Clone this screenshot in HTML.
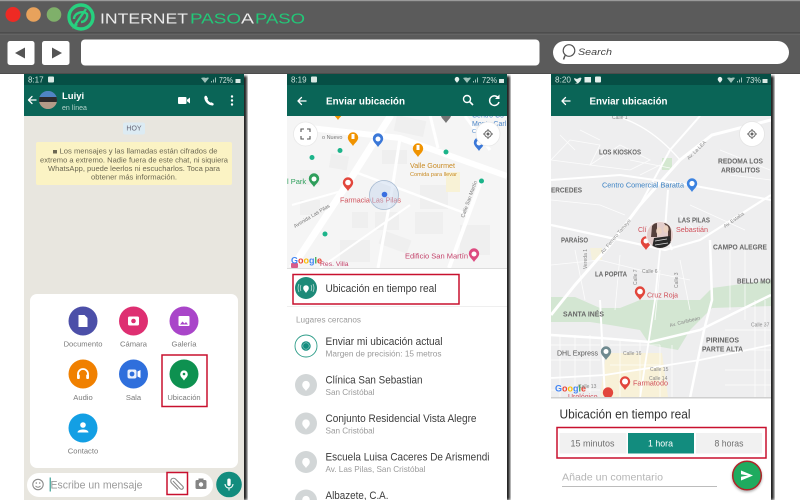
<!DOCTYPE html>
<html lang="es"><head><meta charset="utf-8"><title>WhatsApp ubicación</title>
<style>
html,body{margin:0;padding:0;background:#fff;width:800px;height:500px;overflow:hidden}
svg{display:block;font-family:"Liberation Sans",sans-serif;filter:blur(.3px)}
.st{font-size:8px;fill:#cfe2dc}
.lb{font-size:7.6px;fill:#7b7b7b;text-anchor:middle}
.h{font-size:10.5px;font-weight:bold;fill:#fff}
.t{font-size:11px;fill:#3c3c3c}
.s{font-size:8.4px;fill:#9a9a9a}
.r{fill:none;stroke:#fff;stroke-linecap:round;stroke-linejoin:round}
.m{font-size:7px;font-weight:bold;fill:#666}
.c{font-size:5px;fill:#888}
</style></head><body>
<svg width="800" height="500" viewBox="0 0 800 500" xmlns="http://www.w3.org/2000/svg">
<defs>
<filter id="sh" x="-10%" y="-10%" width="120%" height="120%"><feGaussianBlur stdDeviation="1.3"/></filter>
<path id="pin" d="M0,0C-1.8,-3 -5.2,-5 -5.2,-8.5A5.2,5.2 0 1 1 5.2,-8.5C5.2,-5 1.8,-3 0,0Z"/>
<clipPath id="c2"><rect x="287" y="116" width="220" height="152"/></clipPath>
<clipPath id="c3"><rect x="551" y="116" width="220" height="282"/></clipPath>
<clipPath id="av"><circle cx="660" cy="235" r="13"/></clipPath>
<clipPath id="av1"><circle cx="48" cy="100" r="9"/></clipPath>
</defs>

<!-- browser chrome -->
<rect width="800" height="74" fill="#5b5b5b"/>
<rect width="800" height="1.2" fill="#9a9a9a"/>
<rect y="32.5" width="800" height="1" fill="#3f3f3f"/>
<rect y="33.5" width="800" height="1" fill="#6e6e6e"/>
<rect y="73" width="800" height="1" fill="#4c4c4c"/>
<circle cx="13" cy="14.5" r="7.5" fill="#ee2a24"/>
<circle cx="33.5" cy="14.5" r="7.3" fill="#e8a25c"/>
<circle cx="54" cy="14.5" r="7.3" fill="#7fb06a"/>
<circle cx="81" cy="17" r="12" fill="none" stroke="#27d17f" stroke-width="3.4"/>
<path d="M75,25L86,9M74,19C74,13 83,10 87,14C88,18 85,22 81,22" fill="none" stroke="#27d17f" stroke-width="2.4"/>
<path d="M72,29L78,25L76,23Z" fill="#27d17f"/>
<text x="100" y="23.3" font-size="15" fill="#ececec" textLength="88" lengthAdjust="spacingAndGlyphs">INTERNET</text>
<text x="190" y="23.3" font-size="15" fill="#22c878" textLength="51" lengthAdjust="spacingAndGlyphs">PASO</text>
<text x="241" y="23.3" font-size="15" fill="#ececec" textLength="13" lengthAdjust="spacingAndGlyphs">A</text>
<text x="255" y="23.3" font-size="15" fill="#22c878" textLength="50" lengthAdjust="spacingAndGlyphs">PASO</text>
<rect x="7.5" y="41" width="27" height="24" rx="2.5" fill="#fff"/>
<path d="M15,53L25,47.5V58.5Z" fill="#555"/>
<rect x="42" y="41" width="27.5" height="24" rx="2.5" fill="#fff"/>
<path d="M62,53L52,47.5V58.5Z" fill="#555"/>
<rect x="81" y="39.5" width="458.5" height="26" rx="4" fill="#fff"/>
<rect x="553" y="41" width="236" height="23" rx="11.5" fill="#fff"/>
<circle cx="569" cy="50.5" r="5.8" fill="none" stroke="#555" stroke-width="1.2"/>
<path d="M565,55.5L563.5,59.5" stroke="#555" stroke-width="1.5"/>
<text x="578" y="55" font-size="9" font-style="italic" fill="#444" textLength="34" lengthAdjust="spacingAndGlyphs">Search</text>

<!-- shadows -->
<rect x="241" y="76" width="6" height="424" fill="#222" filter="url(#sh)"/>
<rect x="504" y="76" width="6" height="424" fill="#222" filter="url(#sh)"/>
<rect x="768" y="76" width="6" height="424" fill="#222" filter="url(#sh)"/>

<!-- PHONE 1 -->
<rect x="24" y="74" width="220" height="426" fill="#e8e6df"/>
<rect x="24" y="74" width="220" height="11" fill="#064f45"/>
<rect x="24" y="85" width="220" height="31" fill="#0a6557"/>
<text x="28" y="82.5" class="st">8:17</text>
<rect x="48" y="76.5" width="6" height="6" rx="1" fill="#d8e8e3"/>
<path d="M206,78Q204,77 201,78L205,83L209,78Q208,77 206,78Z" fill="#9dc0b8"/>
<path d="M211,82.5h1v-1.5h-1zM213,82.5h1v-3h-1zM215,82.5h1v-5h-1z" fill="#9dc0b8"/>
<text x="219" y="83" class="st" textLength="14" lengthAdjust="spacingAndGlyphs">72%</text>
<rect x="235.5" y="79" width="5" height="4" fill="#d8e8e3"/>
<path d="M36,100h-7M32,96.5L28.5,100L32,103.5" class="r" stroke-width="1.3"/>
<circle cx="48" cy="100" r="9" fill="#6e7c90"/>
<g clip-path="url(#av1)"><rect x="39" y="91" width="18" height="6" fill="#4f84c4"/><rect x="39" y="97" width="18" height="5" fill="#2e2a2c"/><rect x="39" y="102" width="18" height="7" fill="#b49b88"/></g>
<text x="62" y="99" font-size="9.5" font-weight="bold" fill="#fff">Luiyi</text>
<text x="62" y="110" font-size="7" fill="#b8d4cc">en línea</text>
<rect x="178" y="97" width="8.5" height="7" rx="1" fill="#fff"/><path d="M187,99.8L190,97.5V103.5L187,101.2Z" fill="#fff"/>
<path d="M205,96C206,95.5 207,96 207,96.800L208,98.500C207.500,99.500 207.500,100 209,101.500C210.500,103 211,102.500 211.500,102.200L213.500,103.500C214,104.300 213.500,105.500 212.500,105.500C208,105.500 204,101 204.300,97Z" fill="#fff"/>
<circle cx="232" cy="96.500" r="1.200" fill="#fff"/><circle cx="232" cy="100.500" r="1.200" fill="#fff"/><circle cx="232" cy="104.500" r="1.200" fill="#fff"/>
<rect x="123" y="122.500" width="22" height="12" rx="2" fill="#dcebf3"/>
<text x="134" y="130.500" font-size="7" fill="#667" text-anchor="middle">HOY</text>
<rect x="36" y="142" width="196" height="43" rx="2" fill="#fbf3c4"/>
<g font-size="7.300" fill="#6c6852" text-anchor="middle">
<rect x="53" y="150" width="4" height="3.500" fill="#6c6852"/>
<text x="138.500" y="153.500" textLength="158" lengthAdjust="spacingAndGlyphs">Los mensajes y las llamadas están cifrados de</text>
<text x="134" y="162.500" textLength="188" lengthAdjust="spacingAndGlyphs">extremo a extremo. Nadie fuera de este chat, ni siquiera</text>
<text x="134" y="171" textLength="172" lengthAdjust="spacingAndGlyphs">WhatsApp, puede leerlos ni escucharlos. Toca para</text>
<text x="134" y="179.500" textLength="86" lengthAdjust="spacingAndGlyphs">obtener más información.</text>
</g>
<rect x="30" y="294" width="208" height="174" rx="7" fill="#fff"/>
<g>
<circle cx="83" cy="321" r="14.500" fill="#4c4fa8"/><path d="M78.500,315h6l3,3v9h-9z" fill="#fff"/>
<circle cx="133.500" cy="321" r="14.500" fill="#de2f71"/><rect x="128" y="316.500" width="11" height="9" rx="1.500" fill="#fff"/><circle cx="133.500" cy="321" r="2.300" fill="#de2f71"/>
<circle cx="184" cy="321" r="14.500" fill="#a945c9"/><rect x="178.500" y="316" width="11" height="10" rx="1" fill="#fff"/><path d="M180,324.500l2.500,-3l2,2l1.500,-1.500l2,2.500z" fill="#a945c9"/>
<circle cx="83" cy="374" r="14.500" fill="#f08000"/><path d="M78,377v-3a5,5 0 0 1 10,0v3" fill="none" stroke="#fff" stroke-width="1.800"/><rect x="77" y="374.500" width="2.800" height="4.500" rx="1" fill="#fff"/><rect x="86.200" y="374.500" width="2.800" height="4.500" rx="1" fill="#fff"/>
<circle cx="133.500" cy="374" r="14.500" fill="#2f6fdc"/><rect x="127.500" y="369.500" width="9" height="9" rx="2" fill="#fff" opacity=".9"/><circle cx="132" cy="374" r="2.400" fill="#2f6fdc"/><path d="M137.500,371.500l3,-1.500v8l-3,-1.500z" fill="#fff"/>
<circle cx="184" cy="374" r="14.500" fill="#0e9150"/><path d="M184,380.500c-1,-2 -3.800,-3.500 -3.800,-6.300a3.800,3.800 0 1 1 7.600,0c0,2.800 -2.800,4.300 -3.800,6.300z" fill="#fff"/><circle cx="184" cy="374" r="1.300" fill="#0e9150"/>
<circle cx="83" cy="428" r="14.500" fill="#139fe4"/><circle cx="83" cy="425" r="2.800" fill="#fff"/><path d="M77.500,432.500c0,-4 11,-4 11,0z" fill="#fff"/>
<text x="83" y="346.500" class="lb">Documento</text><text x="133.500" y="346.500" class="lb">Cámara</text><text x="184" y="346.500" class="lb">Galería</text>
<text x="83" y="400" class="lb">Audio</text><text x="133.500" y="400" class="lb">Sala</text><text x="184" y="400" class="lb">Ubicación</text>
<text x="83" y="453.500" class="lb">Contacto</text>
</g>
<rect x="162" y="355" width="45" height="51.500" fill="none" stroke="#c8102e" stroke-width="1.500"/>
<rect x="27" y="473" width="186" height="24" rx="12" fill="#fff"/>
<circle cx="38" cy="484.500" r="5.200" fill="none" stroke="#8a8a8a" stroke-width="1.100"/>
<circle cx="36.300" cy="483" r=".8" fill="#8a8a8a"/><circle cx="39.700" cy="483" r=".8" fill="#8a8a8a"/><path d="M35.500,486q2.500,2.500 5,0" fill="none" stroke="#8a8a8a" stroke-width=".9"/>
<rect x="49.700" y="477.500" width="1" height="14" fill="#128c7e"/>
<text x="50.500" y="488.500" font-size="11" fill="#9a9a9a" textLength="92" lengthAdjust="spacingAndGlyphs">Escribe un mensaje</text>
<path d="M173,481l7,7.500c2,2 4.500,-.5 2.500,-2.500l-7,-7c-1,-1 -3,-1 -4,0c-1,1 -1,3 0,4l6.500,6.500" fill="none" stroke="#8a8a8a" stroke-width="1.100"/>
<rect x="167" y="472.500" width="20.500" height="22" fill="none" stroke="#c8102e" stroke-width="1.500"/>
<rect x="195.500" y="480" width="11" height="9" rx="1.500" fill="#848484"/><rect x="198.500" y="478.500" width="5" height="2" fill="#848484"/><circle cx="201" cy="484.500" r="2.200" fill="#fff"/>
<circle cx="229" cy="484.500" r="12.800" fill="#128c7e"/><rect x="227.300" y="478.500" width="3.400" height="7.500" rx="1.700" fill="#fff"/><path d="M225,484a4,4 0 0 0 8,0M229,488v2.500" fill="none" stroke="#fff" stroke-width="1.100"/>

<!-- PHONE 2 -->
<rect x="287" y="74" width="220" height="426" fill="#fff"/>
<rect x="287" y="74" width="220" height="11" fill="#064f45"/>
<rect x="287" y="85" width="220" height="31" fill="#0a6557"/>
<text x="291" y="82.500" class="st">8:19</text>
<rect x="311" y="76.500" width="6" height="6" rx="1" fill="#d8e8e3"/>
<path d="M457,83c-.7,-1.500 -2.300,-2.200 -2.300,-3.800a2.300,2.300 0 1 1 4.600,0c0,1.600 -1.600,2.300 -2.300,3.800z" fill="#e4efec"/>
<path d="M468,78Q466,77 463,78L467,83L471,78Q470,77 468,78Z" fill="#9dc0b8"/>
<path d="M473,82.500h1v-1.500h-1zM475,82.500h1v-3h-1zM477,82.500h1v-5h-1z" fill="#9dc0b8"/>
<text x="482" y="83" class="st" textLength="15" lengthAdjust="spacingAndGlyphs">72%</text>
<rect x="499" y="79" width="5" height="4" fill="#d8e8e3"/>
<path d="M306,101h-8M301.500,97.500L298,101L301.500,104.500" class="r" stroke-width="1.300"/>
<text x="326" y="104.500" class="h" textLength="79" lengthAdjust="spacingAndGlyphs">Enviar ubicación</text>
<circle cx="467" cy="99" r="3.500" fill="none" stroke="#fff" stroke-width="1.400"/><path d="M469.500,101.500L473,105" stroke="#fff" stroke-width="1.600"/>
<path d="M498,97.500A4.800,4.800 0 1 0 499,102" fill="none" stroke="#fff" stroke-width="1.400"/><path d="M499.500,94.500v4.500h-4.500z" fill="#fff"/>

<g clip-path="url(#c2)">
<rect x="287" y="116" width="220" height="152" fill="#f5f5f5"/>
<g fill="#efefef">
<rect x="330" y="155" width="18" height="14" transform="rotate(10 339 162)"/><rect x="300" y="170" width="20" height="15"/><rect x="382" y="150" width="25" height="14"/><rect x="420" y="185" width="28" height="24"/><rect x="375" y="212" width="24" height="18"/><rect x="352" y="212" width="16" height="16"/><rect x="415" y="212" width="28" height="22"/><rect x="380" y="235" width="30" height="14" transform="rotate(20 395 242)"/><rect x="340" y="240" width="30" height="22"/><rect x="460" y="225" width="30" height="30"/><rect x="300" y="200" width="20" height="15"/><rect x="395" y="118" width="30" height="16" transform="rotate(12 410 126)"/>
</g>
<rect x="446" y="172" width="14" height="20" fill="#f8f2d6"/>
<g fill="none" stroke="#fff">
<path d="M391,115L355,172L292,268" stroke-width="7"/>
<path d="M310,128L400,138L507,176" stroke-width="6"/>
<path d="M481,181L449,268" stroke-width="4"/>
<path d="M400,138L392,190L378,268" stroke-width="3"/>
<path d="M430,115L438,148" stroke-width="3"/>
<path d="M355,172L470,215" stroke-width="2.500"/>
<path d="M292,205L345,190" stroke-width="2"/>
<path d="M320,268L410,205" stroke-width="2"/>
<path d="M465,116L490,150" stroke-width="3"/>
</g>
<text x="472" y="117.500" font-size="7" fill="#4c86c8">Centro Co</text>
<text x="472" y="126" font-size="7" fill="#4c86c8">Monte Carl</text>
<text x="472" y="133" font-size="5.500" fill="#4c86c8">Ce</text>
<text x="322" y="139" font-size="5.500" fill="#777">o Nuevo</text>
<use href="#pin" x="338" y="120" fill="#f09300"/>
<use href="#pin" x="446" y="123" fill="#757575"/>
<use href="#pin" x="353" y="146" fill="#f09300"/><rect x="351.500" y="134" width="3" height="5" fill="#fff"/>
<use href="#pin" x="378" y="147" fill="#3b78d8"/><circle cx="378" cy="139" r="2.500" fill="#fff"/>
<use href="#pin" x="418" y="157" fill="#f09300"/><rect x="416.500" y="145" width="3" height="5" fill="#fff"/>
<use href="#pin" x="479" y="151" fill="#3b78d8"/><circle cx="479" cy="143" r="2.500" fill="#fff"/>
<use href="#pin" x="314" y="187" fill="#2e9e5b"/><circle cx="314" cy="179" r="2.500" fill="#fff"/>
<use href="#pin" x="348" y="191" fill="#e2463c"/><circle cx="348" cy="182.500" r="2.800" fill="#fff"/>
<use href="#pin" x="474" y="262" fill="#dd4a80"/><circle cx="474" cy="254" r="2.500" fill="#fff"/>
<g fill="#1cb48a"><circle cx="312" cy="157.500" r="2.500"/><circle cx="340" cy="150.500" r="2.500"/><circle cx="446" cy="152" r="2.500"/><circle cx="481.500" cy="181" r="2.500"/><circle cx="325" cy="234" r="2.500"/></g>
<text x="410" y="168" font-size="7.500" fill="#c98b24" textLength="45" lengthAdjust="spacingAndGlyphs">Valle Gourmet</text>
<text x="410" y="176" font-size="5.600" fill="#c98b24" textLength="47" lengthAdjust="spacingAndGlyphs">Comida para llevar</text>
<text x="287" y="184" font-size="7.500" fill="#2e9e5b">l Park</text>
<text x="340" y="202.500" font-size="7" fill="#d0505a" textLength="61" lengthAdjust="spacingAndGlyphs">Farmacia Las Pilas</text>
<text x="405" y="258.500" font-size="7" fill="#c4446c" textLength="63" lengthAdjust="spacingAndGlyphs">Edificio San Martín</text>
<text transform="translate(295,228) rotate(-31)" font-size="5.200" fill="#777">Avenida Las Pilas</text>
<text transform="translate(464,218) rotate(-70)" font-size="5.200" fill="#777">Calle San Martín</text>
<circle cx="384" cy="195" r="14.500" fill="#bcd0ea" fill-opacity=".4" stroke="#a5b9d0" stroke-width=".8"/>
<circle cx="384.500" cy="194.500" r="2.800" fill="#3b6fe0"/>
<circle cx="305.500" cy="134" r="12" fill="#fff" stroke="#e8e8e8" stroke-width=".8"/>
<path d="M301,132v-3h3M307,129h3v3M310,136v3h-3M304,139h-3v-3" fill="none" stroke="#555" stroke-width="1.100"/>
<circle cx="488" cy="134" r="12" fill="#fff" stroke="#e8e8e8" stroke-width=".8"/>
<circle cx="488" cy="134" r="3.300" fill="none" stroke="#666" stroke-width="1"/><circle cx="488" cy="134" r="1.500" fill="#666"/><path d="M488,129v1.700M488,137.300v1.700M483,134h1.700M491.300,134h1.700" stroke="#666"/>
<rect x="291" y="263" width="7" height="5" rx="1" fill="#d85c8a"/>
<text x="320" y="266" font-size="6.800" fill="#c4446c">Res. Villa</text>
<text x="291" y="263.500" font-size="9" font-weight="bold" fill="#4285f4">G<tspan fill="#ea4335">o</tspan><tspan fill="#fbbc05">o</tspan><tspan fill="#4285f4">g</tspan><tspan fill="#34a853">l</tspan><tspan fill="#ea4335">e</tspan></text>
</g>
<rect x="287" y="268" width="220" height="1" fill="#ddd"/>
<circle cx="306" cy="288" r="11" fill="#1d8a78"/>
<path d="M306,293c-.9,-1.700 -2.800,-2.800 -2.800,-5a2.800,2.800 0 1 1 5.600,0c0,2.200 -1.900,3.300 -2.800,5z" fill="#fff"/>
<path d="M301,285q-1.500,3 0,6M299,284q-2,4 0,8M311,285q1.500,3 0,6M313,284q2,4 0,8" fill="none" stroke="#cfe6e1" stroke-width=".7"/>
<text x="325.500" y="292" class="t" textLength="111" lengthAdjust="spacingAndGlyphs">Ubicación en tiempo real</text>
<rect x="293" y="274.500" width="166" height="29.500" fill="none" stroke="#c8102e" stroke-width="1.500"/>
<rect x="287" y="306" width="220" height="1" fill="#efefef"/>
<text x="296" y="322.500" font-size="7.800" fill="#9c9c9c" textLength="65" lengthAdjust="spacingAndGlyphs">Lugares cercanos</text>

<circle cx="306" cy="346" r="11" fill="#fff" stroke="#2e9d89" stroke-width=".9"/>
<circle cx="306" cy="346" r="4.700" fill="#128c7e"/><circle cx="306" cy="346" r="3.200" fill="none" stroke="#cfe6e1" stroke-width=".5"/>
<text x="325.500" y="345" class="t" textLength="117" lengthAdjust="spacingAndGlyphs">Enviar mi ubicación actual</text>
<text x="325.500" y="356.500" class="s" textLength="116" lengthAdjust="spacingAndGlyphs">Margen de precisión: 15 metros</text>

<g fill="#d2d6d7"><circle cx="306" cy="385" r="11"/><circle cx="306" cy="423.500" r="11"/><circle cx="306" cy="462" r="11"/><circle cx="306" cy="500.500" r="11"/></g>
<g fill="#fff">
<path d="M306,391c-1,-2 -3.800,-3.300 -3.800,-6.300a3.800,3.800 0 1 1 7.600,0c0,3 -2.800,4.300 -3.800,6.300z"/>
<path d="M306,429.500c-1,-2 -3.800,-3.300 -3.800,-6.300a3.800,3.800 0 1 1 7.600,0c0,3 -2.800,4.300 -3.800,6.300z"/>
<path d="M306,468c-1,-2 -3.800,-3.300 -3.800,-6.300a3.800,3.800 0 1 1 7.600,0c0,3 -2.800,4.300 -3.800,6.300z"/>
<path d="M306,506c-1,-2 -3.800,-3.300 -3.800,-6.300a3.800,3.800 0 1 1 7.600,0c0,3 -2.800,4.300 -3.800,6.300z"/>
</g>
<text x="325.500" y="383.500" class="t" textLength="97" lengthAdjust="spacingAndGlyphs">Clínica San Sebastian</text>
<text x="325.500" y="395" class="s" textLength="49" lengthAdjust="spacingAndGlyphs">San Cristóbal</text>
<text x="325.500" y="422" class="t" textLength="151" lengthAdjust="spacingAndGlyphs">Conjunto Residencial Vista Alegre</text>
<text x="325.500" y="433.500" class="s" textLength="49" lengthAdjust="spacingAndGlyphs">San Cristóbal</text>
<text x="325.500" y="460.500" class="t" textLength="164" lengthAdjust="spacingAndGlyphs">Escuela Luisa Caceres De Arismendi</text>
<text x="325.500" y="472" class="s" textLength="100" lengthAdjust="spacingAndGlyphs">Av. Las Pilas, San Cristóbal</text>
<text x="325.500" y="499" class="t" textLength="63" lengthAdjust="spacingAndGlyphs">Albazete, C.A.</text>

<!-- PHONE 3 -->
<rect x="551" y="74" width="220" height="426" fill="#fff"/>
<rect x="551" y="74" width="220" height="11" fill="#064f45"/>
<rect x="551" y="85" width="220" height="31" fill="#0a6557"/>
<text x="555" y="82.500" class="st" textLength="16" lengthAdjust="spacingAndGlyphs">8:20</text>
<path d="M574,78l3,1 3,-1.500 1.500,.5-1,3-2.500,2.500h-3l2,-1-2.500,-2.500z" fill="#e4efec"/>
<rect x="584.500" y="77" width="6.500" height="5.500" fill="#e4efec"/>
<rect x="595" y="76.500" width="6" height="6" rx="1" fill="#e4efec"/>
<path d="M720,83c-.7,-1.500 -2.300,-2.200 -2.300,-3.800a2.300,2.300 0 1 1 4.600,0c0,1.600 -1.600,2.300 -2.300,3.800z" fill="#e4efec"/>
<path d="M731,78Q729,77 727,78L731,83L735,78Q734,77 731,78Z" fill="#9dc0b8"/>
<path d="M737,82.500h1v-1.500h-1zM739,82.500h1v-3h-1zM741,82.500h1v-5h-1z" fill="#9dc0b8"/>
<text x="746" y="83" class="st" textLength="15" lengthAdjust="spacingAndGlyphs">73%</text>
<rect x="762.500" y="79" width="5" height="4" fill="#d8e8e3"/>
<path d="M570,101h-8M565.500,97.500L562,101L565.500,104.500" class="r" stroke-width="1.300"/>
<text x="589.500" y="104.500" class="h" textLength="78" lengthAdjust="spacingAndGlyphs">Enviar ubicación</text>

<g clip-path="url(#c3)">
<rect x="551" y="116" width="220" height="282" fill="#eeeeef"/>
<g fill="#d3e6d2">
<path d="M551,297H575L600,308H620L640,300H660L700,300L712,288L771,280V306L712,308L690,330L678,350L650,345L640,330L610,325L590,322L551,322Z"/>
<rect x="662" y="158" width="10" height="12" fill="#d4e8d0"/>
</g>
<path d="M606,353H662L668,397H600Z" fill="#f8f1d8"/>
<path d="M590,248h12v12h-10z" fill="#f5f1dc"/>
<g fill="none" stroke="#fff">
<path d="M551,315L575,285L610,245L640,205L680,160L712,135L771,120" stroke-width="3"/>
<path d="M551,180L620,175L690,185L771,200" stroke-width="2"/>
<path d="M668,190L665,230L672,250" stroke-width="2"/>
<path d="M551,225L620,240L665,250L700,240L771,195" stroke-width="2.200"/>
<path d="M710,240L712,300L704,330L690,398" stroke-width="2.500"/>
<path d="M551,335L600,338L650,342L700,330L771,295" stroke-width="2.500"/>
<path d="M551,378L605,375L700,360L771,345" stroke-width="1.800"/>
<path d="M600,300L605,398" stroke-width="2"/>
<path d="M660,250L655,300L640,398" stroke-width="1.800"/>
<path d="M700,116L670,150L640,205" stroke-width="2"/>
<path d="M615,116Q650,125 680,160" stroke-width="1.300"/>
</g>
<g fill="none" stroke="#fff" stroke-width=".8" opacity=".85">
<path d="M551,160L590,165L600,145L570,140Z"/><path d="M590,165L630,170L650,160L620,145Z"/>
<path d="M560,135L575,150M580,130L600,140M630,160L670,168M640,175L660,165M551,200L600,205L625,215"/>
<path d="M551,265L600,260L640,270L690,280M575,250L585,300M620,255L615,310M660,270L655,320M680,260L690,310"/>
<path d="M730,250V310M745,250V320M755,300V398M765,300V398M725,330H771M725,350H771M725,370H771M725,385H771"/>
<path d="M551,345H600M551,360H600M551,390H600M560,335V398M575,335V398M590,335V398"/>
<path d="M610,345H660M610,365H660M620,340V398M640,340V398M660,345V398M672,345V398"/>
<path d="M720,150L770,170M730,175L771,180M690,205L745,230M680,215L700,235"/>
</g>
<text x="599" y="154.500" class="m" textLength="42" lengthAdjust="spacingAndGlyphs">LOS KIOSKOS</text>
<text x="718" y="163.500" class="m" textLength="45" lengthAdjust="spacingAndGlyphs">REDOMA LOS</text>
<text x="721" y="172.500" class="m" textLength="39" lengthAdjust="spacingAndGlyphs">ARBOLITOS</text>
<text x="551" y="192.500" class="m" textLength="31" lengthAdjust="spacingAndGlyphs">ERCEDES</text>
<text x="678" y="222.500" class="m" textLength="32" lengthAdjust="spacingAndGlyphs">LAS PILAS</text>
<text x="561" y="242.500" class="m" textLength="27" lengthAdjust="spacingAndGlyphs">PARAÍSO</text>
<text x="713" y="249.500" class="m" textLength="54" lengthAdjust="spacingAndGlyphs">CAMPO ALEGRE</text>
<text x="595" y="276.500" class="m" textLength="32" lengthAdjust="spacingAndGlyphs">LA POPITA</text>
<text x="737" y="283.500" class="m" textLength="38" lengthAdjust="spacingAndGlyphs">BELLO MON</text>
<text x="563" y="316.500" class="m" textLength="41" lengthAdjust="spacingAndGlyphs">SANTA INÉS</text>
<text x="706" y="342.500" class="m" textLength="33" lengthAdjust="spacingAndGlyphs">PIRINEOS</text>
<text x="702" y="351.500" class="m" textLength="41" lengthAdjust="spacingAndGlyphs">PARTE ALTA</text>
<text x="602" y="187.500" font-size="7" fill="#3b82c4" textLength="82" lengthAdjust="spacingAndGlyphs">Centro Comercial Baratta</text>
<use href="#pin" x="692" y="192" fill="#3b82e0"/><circle cx="692" cy="183.500" r="2.600" fill="#fff"/>
<text x="638" y="232" font-size="7" fill="#d0505a">Clí</text>
<text x="676" y="232" font-size="7" fill="#d0505a" textLength="32" lengthAdjust="spacingAndGlyphs">Sebastián</text>
<use href="#pin" x="646" y="250" fill="#e2463c"/><circle cx="646" cy="241" r="2.500" fill="#fff"/>
<text x="647" y="297.500" font-size="7" fill="#d0505a" textLength="31" lengthAdjust="spacingAndGlyphs">Cruz Roja</text>
<use href="#pin" x="640" y="300" fill="#e2463c"/><circle cx="640" cy="291.500" r="2.800" fill="#fff"/>
<text x="557" y="355.500" font-size="7" fill="#555" textLength="41" lengthAdjust="spacingAndGlyphs">DHL Express</text>
<use href="#pin" x="606" y="360" fill="#6f8a90"/><circle cx="606" cy="351.500" r="2.500" fill="#fff"/>
<text x="633" y="385.500" font-size="7" fill="#d0505a" textLength="35" lengthAdjust="spacingAndGlyphs">Farmatodo</text>
<use href="#pin" x="625" y="390" fill="#e2463c"/><circle cx="625" cy="381.500" r="3" fill="#fff"/>
<text x="568" y="399" font-size="7" fill="#d0505a">Urológico</text>
<use href="#pin" x="608" y="401" fill="#e2463c"/>
<text x="555" y="391.500" font-size="9" font-weight="bold" fill="#4285f4">G<tspan fill="#ea4335">o</tspan><tspan fill="#fbbc05">o</tspan><tspan fill="#4285f4">g</tspan><tspan fill="#34a853">l</tspan><tspan fill="#ea4335">e</tspan></text>
<text x="612" y="119" class="c">Calle 1</text>
<text x="623" y="355" class="c">Calle 16</text>
<text x="650" y="371" class="c">Calle 15</text>
<text x="649" y="380" class="c">Calle 14</text>
<text x="578" y="388" class="c">Calle 13</text>
<text x="751" y="326.500" class="c">Calle 37</text>
<text x="642" y="273" class="c">Calle 6</text>
<text transform="translate(603,254) rotate(-50)" class="c">Av. Ferrero Tamayo</text>
<text transform="translate(689,160) rotate(-45)" class="c">Av. La LEA</text>
<text transform="translate(725,228) rotate(-35)" class="c">Av. Estaba</text>
<text transform="translate(670,327) rotate(-14)" class="c">Av. Caribbean</text>
<text transform="translate(587,269) rotate(-90)" class="c">Vereda 1</text>
<text transform="translate(637,285) rotate(-90)" class="c">Calle 7</text>
<text transform="translate(678,288) rotate(-90)" class="c">Calle 3</text>
<circle cx="660" cy="235" r="14" fill="#f4f0ef"/>
<g clip-path="url(#av)"><rect x="647" y="222" width="26" height="26" fill="#e3cdcb"/><path d="M652,226q2,-3 5,-3v14h-6zM664,223q6,0 7,8v10h-3v-12z" fill="#55403b"/><ellipse cx="659" cy="231" rx="2.800" ry="3.800" fill="#ecd2c0"/><ellipse cx="666" cy="229" rx="2.600" ry="3.800" fill="#ecd2c0"/><path d="M654,238L670,236L671,248H652Z" fill="#2a2a2a"/><path d="M655,241l12,-2M655,245l13,-2" stroke="#ddd" stroke-width=".8"/></g>
<circle cx="752" cy="134" r="12.500" fill="#fff" stroke="#e4e4e4" stroke-width=".8"/>
<circle cx="752" cy="134" r="3.300" fill="none" stroke="#666" stroke-width="1"/><circle cx="752" cy="134" r="1.500" fill="#666"/><path d="M752,129v1.700M752,137.300v1.700M747,134h1.700M755.300,134h1.700" stroke="#666"/>
</g>
<rect x="551" y="397" width="220" height="1.500" fill="#cfcfcf"/>
<text x="559.500" y="418.500" font-size="12.500" fill="#333" textLength="131" lengthAdjust="spacingAndGlyphs">Ubicación en tiempo real</text>
<rect x="559.500" y="433" width="67" height="20.500" fill="#f1f1f1"/>
<rect x="628" y="433" width="66" height="20.500" fill="#128c7e"/>
<rect x="696" y="433" width="66" height="20.500" fill="#f1f1f1"/>
<text x="592.500" y="446.500" font-size="9" fill="#6f6f6f" text-anchor="middle" textLength="44" lengthAdjust="spacingAndGlyphs">15 minutos</text>
<text x="660.500" y="446.500" font-size="9" fill="#fff" text-anchor="middle" textLength="25" lengthAdjust="spacingAndGlyphs">1 hora</text>
<text x="729" y="446.500" font-size="9" fill="#6f6f6f" text-anchor="middle" textLength="29" lengthAdjust="spacingAndGlyphs">8 horas</text>
<rect x="557" y="427.500" width="209" height="30.500" fill="none" stroke="#c8102e" stroke-width="1.500"/>
<text x="562" y="480.500" font-size="10" fill="#b5b5b5" textLength="101" lengthAdjust="spacingAndGlyphs">Añade un comentario</text>
<rect x="562" y="486" width="155" height="1" fill="#bcbcbc"/>
<circle cx="747" cy="477" r="15" fill="#888" filter="url(#sh)" opacity=".7"/>
<circle cx="747" cy="475.500" r="14.300" fill="#1fab5f" stroke="#b02428" stroke-width="1.500"/>
<path d="M741,470.500L753,475.500L741,480.500V476.800L748,475.500L741,474.200Z" fill="#fff"/>
</svg>
</body></html>
